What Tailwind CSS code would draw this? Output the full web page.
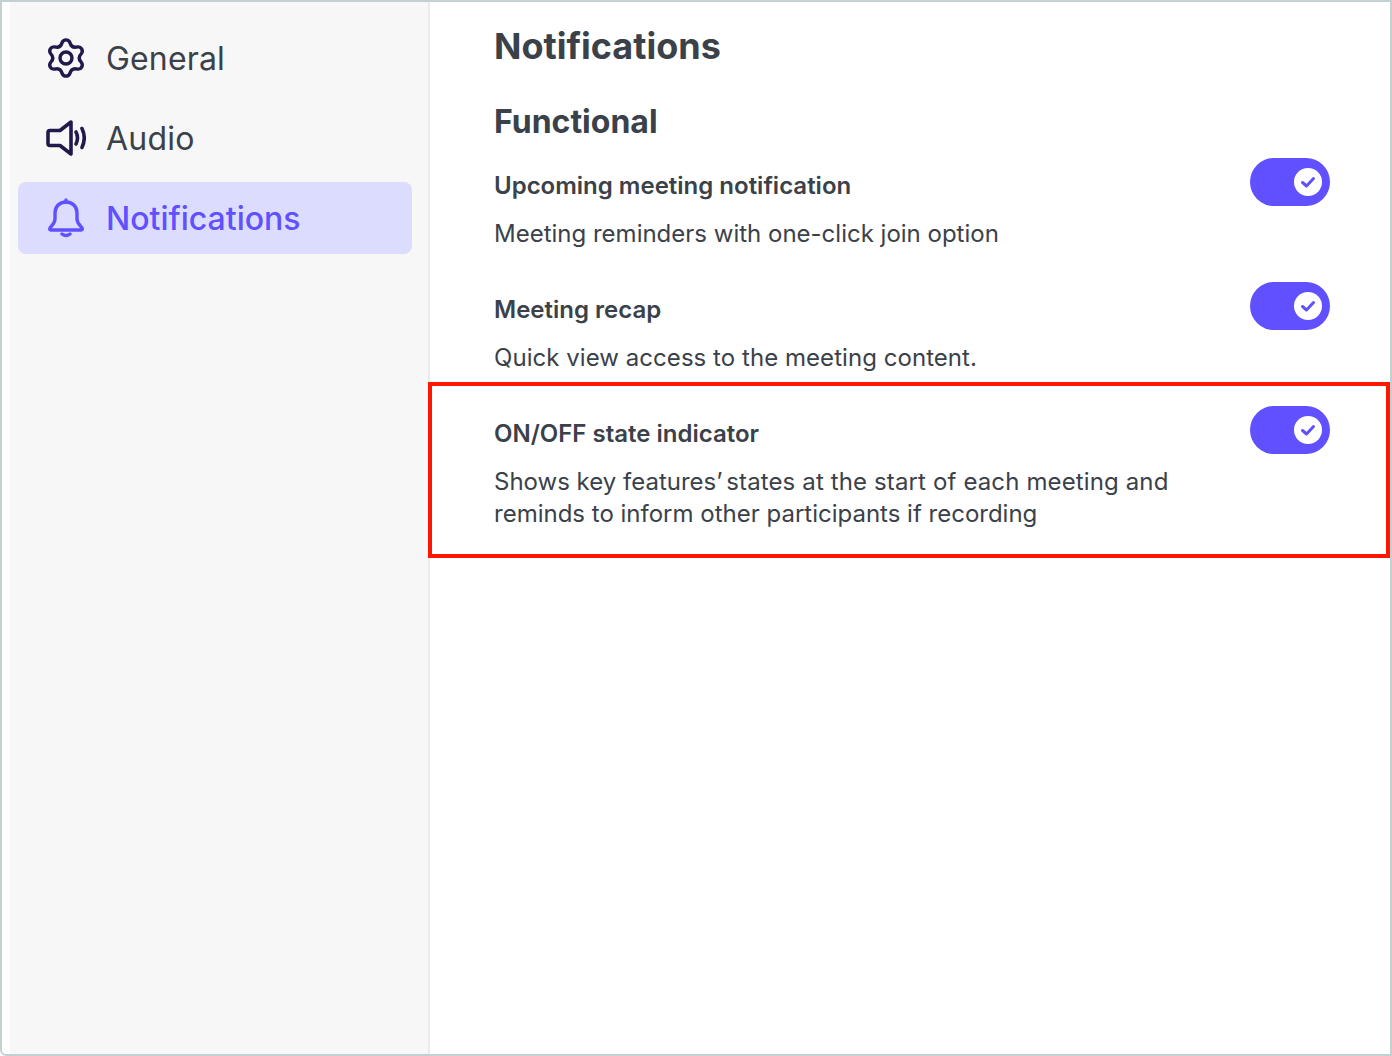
<!DOCTYPE html>
<html lang="en">
<head>
    <meta charset="UTF-8">
    <title>Settings - Notifications</title>
    <script src="https://cdn.jsdelivr.net/npm/@tailwindcss/browser@4"></script>
</head>
<body class="bg-white font-['Inter',sans-serif] text-[#3b4149]">
    <div class="h-[1056px] border-2 border-[#c5d0d2] rounded-bl-md bg-white flex pl-2 overflow-hidden">
        <!-- Sidebar -->
        <nav class="w-[420px] shrink-0 bg-[#f7f7f7] border-r-2 border-[#ebebeb] pt-5 pl-2 pr-4 flex flex-col gap-2">
            <a class="h-[72px] flex items-center gap-5 pl-7 rounded-lg text-[32px] tracking-[0.15px]">
                <svg class="w-10 h-10 text-[#1f1a4b]" viewBox="0 0 40 40" fill="none" stroke="currentColor" stroke-width="3.4" stroke-linejoin="round">
                    <path d="M16.13 4.48A4.2 4.2 0 0 1 23.87 4.48Q25.5 10.47 31.51 8.88A4.2 4.2 0 0 1 35.38 15.59Q31 20 35.38 24.41A4.2 4.2 0 0 1 31.51 31.12Q25.5 29.53 23.87 35.52A4.2 4.2 0 0 1 16.13 35.52Q14.5 29.53 8.49 31.12A4.2 4.2 0 0 1 4.62 24.41Q9 20 4.62 15.59A4.2 4.2 0 0 1 8.49 8.88Q14.5 10.47 16.13 4.48Z"/>
                    <circle cx="20" cy="20" r="6"/>
                </svg>
                <span class="pt-[2px]">General</span>
            </a>
            <a class="h-[72px] flex items-center gap-5 pl-7 rounded-lg text-[32px] tracking-[0.25px]">
                <svg class="w-10 h-10 text-[#1f1a4b]" viewBox="0 0 40 40" fill="none" stroke="currentColor" stroke-width="3.6" stroke-linecap="round" stroke-linejoin="round">
                    <path d="M25 4L14 12.5H4A2 2 0 0 0 2 14.5V25.5A2 2 0 0 0 4 27.5H14L25 36Z"/>
                    <path d="M30 14Q33 20 30 26"/>
                    <path d="M36 10.5Q40.5 20 36 29.5"/>
                </svg>
                <span class="pt-[2px]">Audio</span>
            </a>
            <a class="h-[72px] flex items-center gap-5 pl-7 rounded-lg text-[32px] font-medium bg-[#dcdcff] text-[#6050ff]">
                <svg class="w-10 h-10" viewBox="0 0 40 40" fill="none" stroke="currentColor" stroke-width="3.4" stroke-linecap="round" stroke-linejoin="round">
                    <path d="M20 2V4"/>
                    <path d="M20 4C13 4 9 9 9 15V21C9 25 6 27 4 30Q3 32 5 32H35Q37 32 36 30C34 27 31 25 31 21V15C31 9 27 4 20 4Z"/>
                    <path d="M16 36Q20 39 24 36"/>
                </svg>
                <span class="pt-[2px]">Notifications</span>
            </a>
        </nav>

        <!-- Main Content -->
        <main class="relative flex-1 pl-16 pr-[60px]">
            <h1 class="text-[36px] leading-[44px] font-bold mt-[22px]">Notifications</h1>
            <h2 class="text-[32px] leading-[40px] font-bold mt-[34px]">Functional</h2>

            <div class="mt-[16px] flex flex-col">
                <div class="h-[124px] flex justify-between items-start">
                    <div>
                        <p class="text-2xl leading-8 font-semibold mt-[12px]">Upcoming meeting notification</p>
                        <p class="text-2xl leading-8 mt-4">Meeting reminders with one-click join option</p>
                    </div>
                    <span class="w-20 h-12 rounded-full bg-[#6050ff] flex items-center justify-end pr-2 shrink-0">
                        <span class="w-7 h-7 rounded-full bg-white flex items-center justify-center">
                            <svg class="w-7 h-7" viewBox="0 0 28 28" fill="none" stroke="#6050ff" stroke-width="3" stroke-linecap="round" stroke-linejoin="round"><path d="M8.5 14.5L12.5 18L19.5 10.5"/></svg>
                        </span>
                    </span>
                </div>
                <div class="h-[124px] flex justify-between items-start">
                    <div>
                        <p class="text-2xl leading-8 font-semibold mt-[12px]">Meeting recap</p>
                        <p class="text-2xl leading-8 mt-4 tracking-[0.05px]">Quick view access to the meeting content.</p>
                    </div>
                    <span class="w-20 h-12 rounded-full bg-[#6050ff] flex items-center justify-end pr-2 shrink-0">
                        <span class="w-7 h-7 rounded-full bg-white flex items-center justify-center">
                            <svg class="w-7 h-7" viewBox="0 0 28 28" fill="none" stroke="#6050ff" stroke-width="3" stroke-linecap="round" stroke-linejoin="round"><path d="M8.5 14.5L12.5 18L19.5 10.5"/></svg>
                        </span>
                    </span>
                </div>
                <div class="flex justify-between items-start">
                    <div class="w-[700px]">
                        <p class="text-2xl leading-8 font-semibold mt-[12px]">ON/OFF state indicator</p>
                        <p class="text-2xl leading-8 mt-4">Shows key features<span class="tracking-[-3px]">’</span> <span class="tracking-[0.13px]">states at the start of each meeting and</span> reminds to inform other participants if recording</p>
                    </div>
                    <span class="w-20 h-12 rounded-full bg-[#6050ff] flex items-center justify-end pr-2 shrink-0">
                        <span class="w-7 h-7 rounded-full bg-white flex items-center justify-center">
                            <svg class="w-7 h-7" viewBox="0 0 28 28" fill="none" stroke="#6050ff" stroke-width="3" stroke-linecap="round" stroke-linejoin="round"><path d="M8.5 14.5L12.5 18L19.5 10.5"/></svg>
                        </span>
                    </span>
                </div>
            </div>

            <!-- Annotation box -->
            <div class="absolute left-[-2px] right-0 top-[380px] h-[176px] border-4 border-[#ff1500] pointer-events-none"></div>
        </main>
    </div>
</body>
</html>
